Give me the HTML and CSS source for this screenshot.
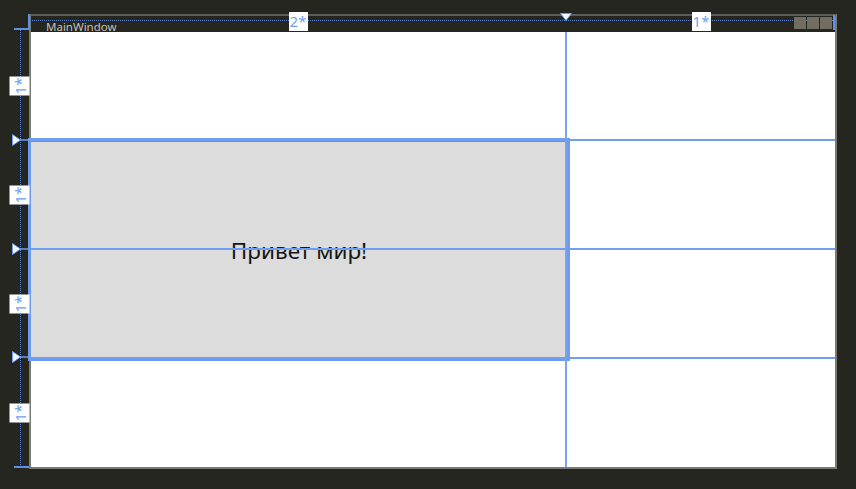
FILE: index.html
```
<!DOCTYPE html>
<html lang="ru">
<head>
    <meta charset="UTF-8">
    <title>MainWindow - designer</title>
    <link rel="stylesheet" href="styles.css">
</head>
<body>

<div class="designer">

  <!-- left ruler: row sizes of the grid -->
  <div class="row-ruler">
    <div class="ruler-corner"></div>
    <div class="row-track"></div>
    <span class="size-tag rot r1">1*</span>
    <span class="size-tag rot r2">1*</span>
    <span class="size-tag rot r3">1*</span>
    <span class="size-tag rot r4">1*</span>
    <svg class="row-mark r2" width="18" height="12" viewBox="0 0 18 12"><line x1="8" y1="6" x2="18" y2="6" /><polygon points="0.5,0.5 8.5,6 0.5,11.5" /></svg>
    <svg class="row-mark r3" width="18" height="12" viewBox="0 0 18 12"><line x1="8" y1="6" x2="18" y2="6" /><polygon points="0.5,0.5 8.5,6 0.5,11.5" /></svg>
    <svg class="row-mark r4" width="18" height="12" viewBox="0 0 18 12"><line x1="8" y1="6" x2="18" y2="6" /><polygon points="0.5,0.5 8.5,6 0.5,11.5" /></svg>
    <div class="row-end"></div>
  </div>

  <!-- the window being designed -->
  <div class="frame">
    <div class="titlebar">
      <div class="col-track"></div>
      <span class="wintitle">MainWindow</span>
      <span class="size-tag c1">2*</span>
      <span class="size-tag c2">1*</span>
      <svg class="col-mark" width="12" height="8" viewBox="0 0 12 8"><polygon points="0.5,0.5 11.5,0.5 6,7.5" /></svg>
      <div class="winbtns">
        <span class="winbtn"></span>
        <span class="winbtn"></span>
        <span class="winbtn"></span>
        <span class="col-end"></span>
      </div>
    </div>

    <div class="client">
      <div class="element">Привет мир!</div>
      <div class="gline-v"></div>
      <div class="gline-h at2"></div>
      <div class="gline-h at3"></div>
      <div class="gline-h at4"></div>
    </div>
  </div>

</div>

</body>
</html>
```

FILE: styles.css
```
* {
    margin: 0;
    padding: 0;
    box-sizing: border-box;
}
body {
    width: 856px;
    height: 489px;
    background-color: #262621;
    font-family: "Noto Sans", "Liberation Sans", sans-serif;
    overflow: hidden;
}

.designer {
    display: grid;
    grid-template-columns: 29px 808px;
    padding-top: 14px;
}

/* ---- left ruler ---- */
.row-ruler {
    grid-column: 1;
    grid-row: 1;
    display: grid;
    grid-template-columns: 29px;
    grid-template-rows: 18px repeat(4, 1fr) 2px;
    height: 455px;
    position: relative;
    z-index: 1;
}
.row-ruler > * {
    grid-column: 1;
}
.r1 { grid-row: 2; }
.r2 { grid-row: 3; }
.r3 { grid-row: 4; }
.r4 { grid-row: 5; }

.ruler-corner {
    grid-row: 1;
    align-self: end;
    justify-self: end;
    width: 16px;
    height: 16px;
    margin-right: -1px;
    margin-bottom: 2px;
    border-right: 2px solid #5f8fe6;
    border-bottom: 2px solid #5f8fe6;
}
.row-track {
    grid-row: 1 / -1;
    width: 0;
    margin-left: 20px;
    margin-top: 16px;
    margin-bottom: 2px;
    border-left: 1px dotted #5b80c8;
}
.row-end {
    grid-row: 5;
    align-self: end;
    justify-self: end;
    width: 15px;
    height: 0;
    margin-bottom: -1px;
    border-top: 2px solid #5f8fe6;
}

.size-tag {
    display: flex;
    align-items: center;
    justify-content: center;
    width: 19px;
    height: 19px;
    background-color: white;
    color: #6f9ff0;
    font-size: 15px;
    line-height: 1;
}
.size-tag.rot {
    align-self: center;
    justify-self: end;
    height: 20px;
    transform: rotate(-90deg);
}

.row-mark {
    align-self: start;
    justify-self: start;
    margin-left: 12px;
    margin-top: -7px;
}
.row-mark line {
    stroke: #6f9ff0;
    stroke-width: 1.5;
}
.row-mark polygon,
.col-mark polygon {
    fill: #f4f7ff;
    stroke: #6f9ff0;
    stroke-width: 1;
}

/* ---- window frame ---- */
.frame {
    grid-column: 2;
    grid-row: 1;
    display: flex;
    flex-direction: column;
    height: 455px;
    border: 2px solid #7a7a76;
    border-top-color: #5c5c58;
}

.titlebar {
    height: 16px;
    display: grid;
    grid-template-columns: 2fr 1fr;
    background-color: #262621;
}
.titlebar > * {
    grid-row: 1;
}
.col-track {
    grid-column: 1 / -1;
    align-self: start;
    margin-top: 4px;
    margin-left: -2px;
    border-top: 1px dotted #5b80c8;
}
.wintitle {
    grid-column: 1;
    justify-self: start;
    align-self: center;
    margin-left: 15px;
    margin-top: 3px;
    font-size: 11.5px;
    color: #c2c2ba;
}
.size-tag.c1 {
    grid-column: 1;
    justify-self: center;
    align-self: start;
    margin-top: -4px;
    margin-left: -2px;
}
.size-tag.c2 {
    grid-column: 2;
    justify-self: center;
    align-self: start;
    margin-top: -4px;
}
.col-mark {
    grid-column: 2;
    justify-self: start;
    align-self: start;
    margin-left: -7px;
    margin-top: -3px;
}
.winbtns {
    grid-column: 2;
    justify-self: end;
    align-self: start;
    display: flex;
    gap: 1px;
    margin-top: -1px;
}
.winbtn {
    width: 12px;
    height: 12px;
    margin-top: 2px;
    background-color: #716d60;
}
.col-end {
    width: 2px;
    height: 15px;
    background-color: #5f8fe6;
}

/* ---- client area with the layout grid ---- */
.client {
    flex: 1;
    display: grid;
    grid-template-columns: 2fr 1fr;
    grid-template-rows: repeat(4, 1fr);
    background-color: white;
}
.element {
    grid-column: 1;
    grid-row: 2 / 4;
    display: flex;
    align-items: center;
    justify-content: center;
    background-color: #dcdcdc;
    border-top: 1px solid #8c8c8c;
    outline: 3px solid #6f9bec;
    font-size: 22.5px;
    color: #151515;
}
.gline-v {
    grid-column: 2;
    grid-row: 1 / -1;
    justify-self: start;
    width: 2px;
    margin-left: -2px;
    background-color: #78a4f2;
}
.gline-h {
    grid-column: 1 / -1;
    align-self: start;
    height: 2px;
    margin-top: -1.5px;
    background-color: #6f9ff0;
}
.gline-h.at2 { grid-row: 2; }
.gline-h.at3 { grid-row: 3; }
.gline-h.at4 { grid-row: 4; }
```
